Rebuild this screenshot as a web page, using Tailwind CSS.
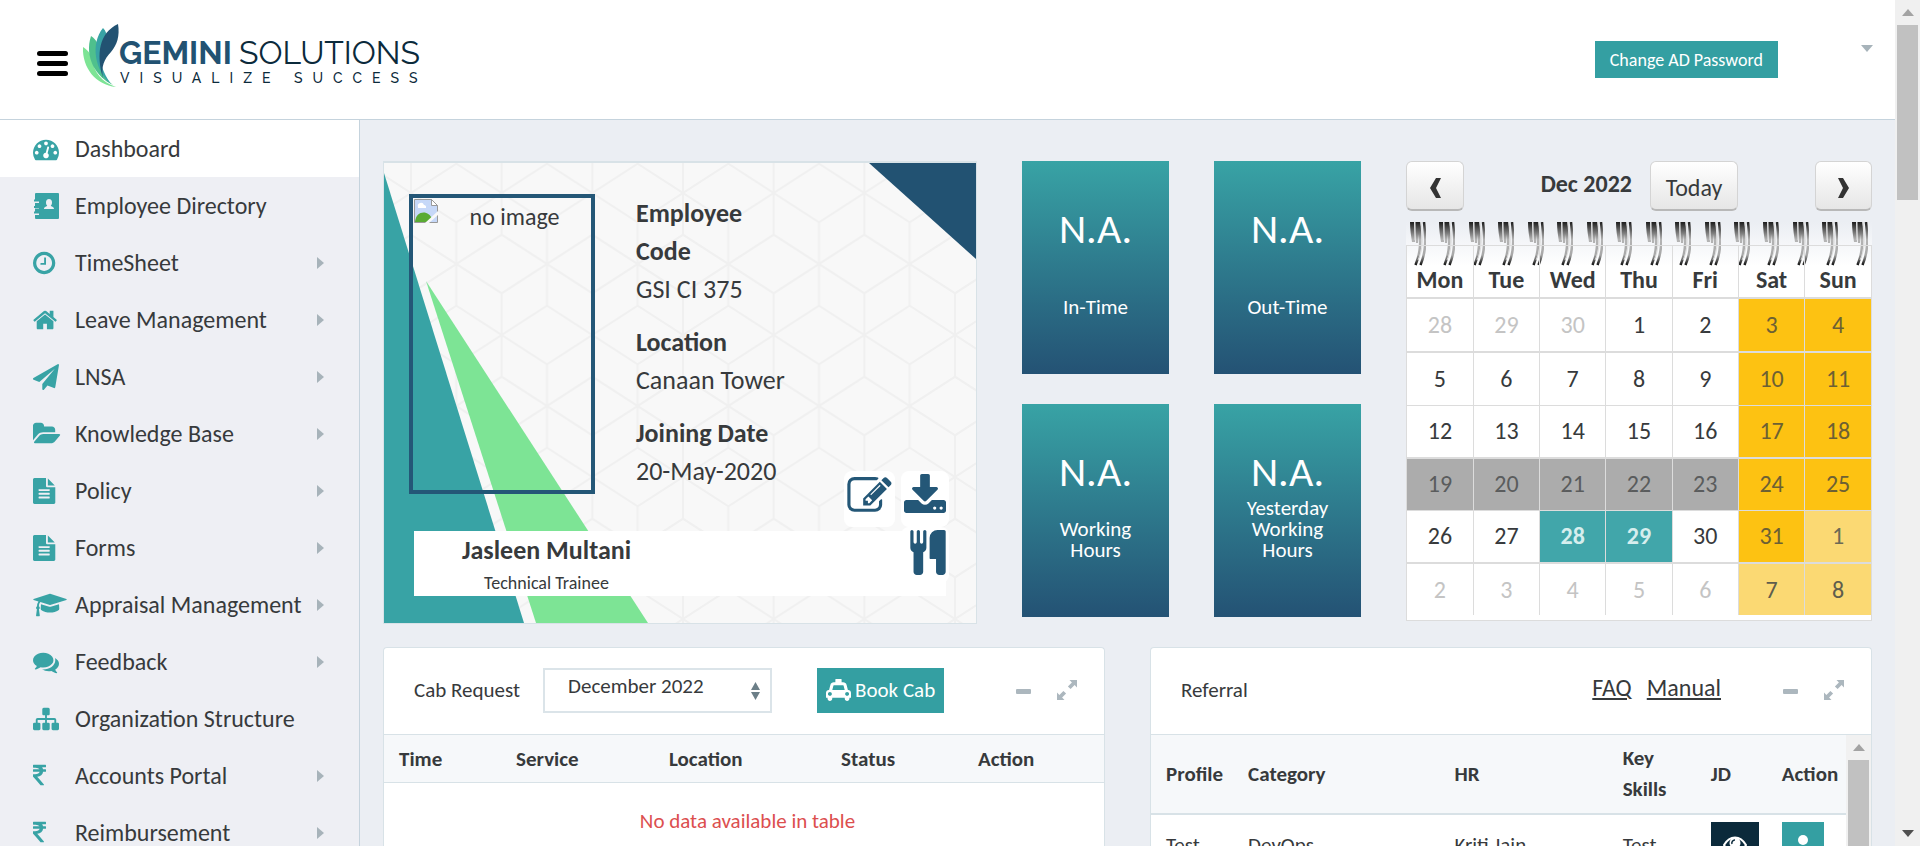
<!DOCTYPE html>
<html lang="en">
<head>
<meta charset="utf-8">
<title>Gemini Solutions</title>
<script src="https://cdn.jsdelivr.net/npm/@tailwindcss/browser@4"></script>
</head>
<body class="flex h-screen overflow-hidden bg-[#ebeef3] font-['Carlito','Lato',sans-serif] text-2xl text-[#373a3c]">

<svg class="absolute size-0" aria-hidden="true">
  <symbol id="gauge" viewBox="0 0 1792 1792"><path d="M384 1152q0-53-37.5-90.5t-90.5-37.5-90.5 37.5-37.5 90.5 37.5 90.5 90.5 37.5 90.5-37.5 37.5-90.5zm192-448q0-53-37.5-90.5t-90.5-37.5-90.5 37.5-37.5 90.5 37.5 90.5 90.5 37.5 90.5-37.5 37.5-90.5zm428 481l101-382q6-26-7.5-48.5t-38.5-29.5-48 6.5-30 39.5l-101 382q-60 5-107 43.5t-63 98.5q-20 77 20 146t117 89 146-20 89-117q16-60-6-117t-72-91zm660-33q0-53-37.5-90.5t-90.5-37.5-90.5 37.5-37.5 90.5 37.5 90.5 90.5 37.5 90.5-37.5 37.5-90.5zm-640-640q0-53-37.5-90.5t-90.5-37.5-90.5 37.5-37.5 90.5 37.5 90.5 90.5 37.5 90.5-37.5 37.5-90.5zm448 192q0-53-37.5-90.5t-90.5-37.5-90.5 37.5-37.5 90.5 37.5 90.5 90.5 37.5 90.5-37.5 37.5-90.5zm320 448q0 261-141 483-19 29-54 29h-1402q-35 0-54-29-141-221-141-483 0-182 71-348t191-286 286-191 348-71 348 71 286 191 191 286 71 348z"/></symbol>
  <symbol id="book" viewBox="0 0 26 26"><path fill-rule="evenodd" d="M3 0h22a1 1 0 0 1 1 1v24a1 1 0 0 1-1 1H3a1 1 0 0 1-1-1v-3h4v-1.500H1v-2h1v-3h4V15H1v-2h1v-3h4V8.500H1v-2h1V1a1 1 0 0 1 1-1zm13 6c-2 0-3 1.500-3 3.500 0 1.500.500 2.500 1.200 3.200-.3 1-3.200.800-3.200 3.300h10c0-2.500-2.900-2.300-3.200-3.300.7-.7 1.200-1.700 1.200-3.200C19 7.500 18 6 16 6z"/></symbol>
  <symbol id="clock" viewBox="128 0 1792 1792"><path d="M1024 544v448q0 14-9 23t-23 9h-320q-14 0-23-9t-9-23v-64q0-14 9-23t23-9h224v-352q0-14 9-23t23-9h64q14 0 23 9t9 23zm416 352q0-148-73-273t-198-198-273-73-273 73-198 198-73 273 73 273 198 198 273 73 273-73 198-198 73-273zm224 0q0 209-103 385.5t-279.5 279.5-385.5 103-385.5-103-279.5-279.500-103-385.500 103-385.500 279.500-279.500 385.500-103 385.500 103 279.500 279.500 103 385.500z"/></symbol>
  <symbol id="home" viewBox="64 0 1792 1792"><path d="M1472 992v480q0 26-19 45t-45 19h-384v-384h-256v384h-384q-26 0-45-19t-19-45v-480q0-1 .5-3t.5-3l575-474 575 474q1 2 1 6zm223-69l-62 74q-8 9-21 11h-3q-13 0-21-7l-692-577-692 577q-12 8-24 7-13-2-21-11l-62-74q-8-10-7-23.5t11-21.5l719-599q32-26 76-26t76 26l244 204v-195q0-14 9-23t23-9h192q14 0 23 9t9 23v408l219 182q10 8 11 21.5t-7 23.5z"/></symbol>
  <symbol id="plane" viewBox="0 0 1792 1792"><path d="M1764 11q33 24 27 64l-256 1536q-5 29-32 45-14 8-31 8-11 0-24-5l-453-185-242 295q-18 23-49 23-13 0-22-4-19-7-30.5-23.5t-11.5-36.5v-349l864-1059-1069 925-395-162q-37-14-40-55-2-40 32-59l1664-960q15-9 32-9 20 0 36 11z"/></symbol>
  <symbol id="folder" viewBox="0 0 1815 1792"><path d="M1815 952q0 31-31 66l-336 396q-43 51-120.5 86.5t-143.5 35.5h-1088q-34 0-60.5-13t-26.5-43q0-31 31-66l336-396q43-51 120.5-86.5t143.5-35.5h1088q34 0 60.5 13t26.5 43zm-343-344v160h-832q-94 0-197 47.5t-164 119.5l-337 396-5 6q0-4-.5-12.5t-.5-12.5v-960q0-92 66-158t158-66h320q92 0 158 66t66 158v32h544q92 0 158 66t66 158z"/></symbol>
  <symbol id="file" viewBox="128 0 1792 1792"><path d="M1596 476q14 14 28 36h-472v-472q22 14 36 28zm-476 164h544v1056q0 40-28 68t-68 28h-1344q-40 0-68-28t-28-68v-1600q0-40 28-68t68-28h800v544q0 40 28 68t68 28zm160 736v-64q0-14-9-23t-23-9h-704q-14 0-23 9t-9 23v64q0 14 9 23t23 9h704q14 0 23-9t9-23zm0-256v-64q0-14-9-23t-23-9h-704q-14 0-23 9t-9 23v64q0 14 9 23t23 9h704q14 0 23-9t9-23zm0-256v-64q0-14-9-23t-23-9h-704q-14 0-23 9t-9 23v64q0 14 9 23t23 9h704q14 0 23-9t9-23z"/></symbol>
  <symbol id="cap" viewBox="0 0 2304 1792"><path d="M1774 836l18 316q4 69-82 128t-235 93.5-323 34.5-323-34.5-235-93.5-82-128l18-316 574 181q22 7 48 7t48-7zm530-324q0 23-22 31l-1120 352q-4 1-10 1t-10-1l-652-206q-43 34-71 111.5t-34 178.5q63 36 63 109 0 69-58 107l58 433q2 14-8 25-9 11-24 11h-192q-15 0-24-11-10-11-8-25l58-433q-58-38-58-107 0-73 65-111 11-207 98-330l-333-104q-22-8-22-31t22-31l1120-352q4-1 10-1t10 1l1120 352q22 8 22 31z"/></symbol>
  <symbol id="comments" viewBox="0 0 1792 1792"><path d="M1408 768q0 139-94 257t-256.500 186.500-353.500 68.500q-86 0-176-16-124 88-278 128-36 9-86 16h-3q-11 0-20.500-8t-11.500-21q-1-3-1-6.500t.5-6.500 2-6l2.500-5 3.500-5.500 4-5 4.500-5 4-4.500q5-6 23-25t26-29.500 22.500-29 25-38.500 20.500-44q-124-72-195-177t-71-224q0-139 94-257t256.500-186.500 353.500-68.500 353.500 68.500 256.500 186.500 94 257zm384 256q0 120-71 224.500t-195 176.500q10 24 20.500 44t25 38.500 22.500 29 26 29.500 23 25q1 1 4 4.500t4.500 5 4 5 3.500 5.500l2.500 5 2 6 .5 6.500-1 6.500q-3 14-13 22t-22 7q-50-7-86-16-154-40-278-128-90 16-176 16-271 0-472-132 58 4 88 4 161 0 309-45t264-129q125-92 192-212t67-254q0-77-23-152 129 71 204 178t75 230z"/></symbol>
  <symbol id="sitemap" viewBox="0 0 1792 1792"><path d="M1792 1248v320q0 40-28 68t-68 28h-320q-40 0-68-28t-28-68v-320q0-40 28-68t68-28h96v-192h-512v192h96q40 0 68 28t28 68v320q0 40-28 68t-68 28h-320q-40 0-68-28t-28-68v-320q0-40 28-68t68-28h96v-192h-512v192h96q40 0 68 28t28 68v320q0 40-28 68t-68 28h-320q-40 0-68-28t-28-68v-320q0-40 28-68t68-28h96v-192q0-52 38-90t90-38h512v-192h-96q-40 0-68-28t-28-68v-320q0-40 28-68t68-28h320q40 0 68 28t28 68v320q0 40-28 68t-68 28h-96v192h512q52 0 90 38t38 90v192h96q40 0 68 28t28 68z"/></symbol>
  <symbol id="rupee" viewBox="448 0 1792 1792"><path d="M1345 470v102q0 14-9 23t-23 9h-168q-23 144-129 234t-276 110q167 178 459 536 14 16 4 34-8 18-29 18h-195q-16 0-25-12-306-367-498-571-9-9-9-22v-127q0-13 9.500-22.500t22.500-9.500h112q132 0 212.500-43t102.500-125h-427q-14 0-23-9t-9-23v-102q0-14 9-23t23-9h413q-57-113-268-113h-145q-13 0-22.500-9.500t-9.500-22.500v-133q0-14 9-23t23-9h832q14 0 23 9t9 23v102q0 14-9 23t-23 9h-233q47 61 64 144h171q14 0 23 9t9 23z"/></symbol>
  <symbol id="edit" viewBox="0 128 1792 1536"><path d="M888 1184l116-116-152-152-116 116v56h96v96h56zm440-720q-16-16-33 1l-350 350q-17 17-1 33t33-1l350-350q17-17 1-33zm80 594v190q0 119-84.5 203.5t-203.5 84.5h-832q-119 0-203.5-84.5t-84.5-203.5v-832q0-119 84.5-203.5t203.5-84.5h832q63 0 117 25 15 7 18 23 3 17-9 29l-49 49q-14 14-32 8-23-6-45-6h-832q-66 0-113 47t-47 113v832q0 66 47 113t113 47h832q66 0 113-47t47-113v-126q0-13 9-22l64-64q15-15 35-7t20 29zm-96-738l288 288-672 672h-288v-288zm444 132l-92 92-288-288 92-92q28-28 68-28t68 28l152 152q28 28 28 68t-28 68z"/></symbol>
  <symbol id="download" viewBox="64 0 1664 1536"><path d="M1344 1344q0-26-19-45t-45-19-45 19-19 45 19 45 45 19 45-19 19-45zm256 0q0-26-19-45t-45-19-45 19-19 45 19 45 45 19 45-19 19-45zm128-224v320q0 40-28 68t-68 28h-1472q-40 0-68-28t-28-68v-320q0-40 28-68t68-28h465l135 136q58 56 136 56t136-56l136-136h464q40 0 68 28t28 68zm-325-569q17 41-14 70l-448 448q-18 19-45 19t-45-19l-448-448q-31-29-14-70 17-39 59-39h256v-448q0-26 19-45t45-19h256q26 0 45 19t19 45v448h256q42 0 59 39z"/></symbol>
  <symbol id="cutlery" viewBox="192 64 1408 1792"><path d="M832 128v640q0 61-35.5 111t-92.5 70v779q0 52-38 90t-90 38h-128q-52 0-90-38t-38-90v-779q-57-20-92.500-70t-35.500-111v-640q0-26 19-45t45-19 45 19 19 45v416q0 26 19 45t45 19 45-19 19-45v-416q0-26 19-45t45-19 45 19 19 45v416q0 26 19 45t45 19 45-19 19-45v-416q0-26 19-45t45-19 45 19 19 45zm768 0v1600q0 52-38 90t-90 38h-128q-52 0-90-38t-38-90v-512h-224q-13 0-22.500-9.500t-9.500-22.500v-800q0-132 94-226t226-94h256q26 0 45 19t19 45z"/></symbol>
  <symbol id="taxi" viewBox="0 0 2048 1792"><path d="M1824 896q92 0 158 66t66 158v384q0 14-9 23t-23 9h-96v64q0 80-56 136t-136 56-136-56-56-136v-64h-1024v64q0 80-56 136t-136 56-136-56-56-136v-64h-96q-14 0-23-9t-9-23v-384q0-92 66-158t158-66h28l105-419q23-94 103-157t179-63h128v-224q0-14 9-23t23-9h448q14 0 23 9t9 23v224h128q99 0 179 63t103 157l105 419h28zm-1504 480q66 0 113-47t47-113-47-113-113-47-113 47-47 113 47 113 113 47zm196-480h1016l-89-357q-2-8-14-17.500t-21-9.500h-768q-9 0-21 9.500t-14 17.500zm1212 480q66 0 113-47t47-113-47-113-113-47-113 47-47 113 47 113 113 47z"/></symbol>
  <symbol id="minus" viewBox="0 0 20 20"><rect x="3" y="9" width="15" height="5" rx="1"/></symbol>
  <symbol id="expand" viewBox="0 0 20 20"><path d="M12.500 0H20v7.500l-2.400-2.400-4 4-2.700-2.700 4-4zM0 12.500l2.400 2.400 4-4 2.700 2.700-4 4L7.500 20H0z"/></symbol>
  <symbol id="right" viewBox="0 0 7 12"><path d="M0 0l7 6-7 6z"/></symbol>
  <linearGradient id="wire" gradientUnits="userSpaceOnUse" x1="0" y1="0" x2="0" y2="44"><stop offset="0" stop-color="#1c1c1c"/><stop offset=".4" stop-color="#b4b4b4"/><stop offset=".75" stop-color="#a8a8a8"/><stop offset="1" stop-color="#000"/></linearGradient>
  <symbol id="ring" viewBox="0 0 16 44">
    <path d="M0 0h4l1 20H2C1 14 0 7 0 0zM5 0h4v12l-1 9H6C5.500 14 5 7 5 0z" fill="url(#wire)"/>
    <path d="M9 0c2 18 2 30-3.500 43M14 0c2 18 2 30-3.500 43" fill="none" stroke="url(#wire)" stroke-width="2.500"/>
    <path d="M11 0c2 16 2 28-3 38M5 0v18" fill="none" stroke="#ddd" stroke-width="1"/>
  </symbol>
</svg>

<div class="flex min-w-0 flex-1 flex-col">
  <header class="flex h-[120px] shrink-0 items-start border-b border-[#c5d3dd] bg-white pr-[22px] pl-[37px]">
    <button aria-label="Toggle menu" class="mt-[51px] flex w-[31px] flex-col gap-[5px]">
      <span class="h-[5px] rounded-sm bg-black"></span><span class="h-[5px] rounded-sm bg-black"></span><span class="h-[5px] rounded-sm bg-black"></span>
    </button>
    <a href="#" aria-label="Gemini Solutions, visualize success" class="mt-[22px] ml-[14px]">
      <svg class="h-[66px] w-[360px]" viewBox="0 0 360 66">
        <path fill="#7de495" d="M1 25c5 3 9 8 10 15 1 9 8 20 23 25C14 63 0 46 1 25z"/>
        <path fill="#4fc08d" d="M9 14c6 4 8 9 8 16 0 14 3 25 14 33C14 55 2 35 9 14z"/>
        <path fill="#38a3a5" d="M21 6c3 3 4 6 3 10-6 9-8 22-2 34 2 5 5 9 7 12C13 49 8 22 21 6z"/>
        <path fill="#225272" d="M36 2c2 12-1 21-7 28-7 7-10 15-8 26C14 32 17 11 36 2z"/>
        <g class="font-['Raleway','Lato',sans-serif]">
          <text x="37" y="42" class="fill-[#225272] text-[32px] font-bold">GEMINI</text>
          <text x="157" y="42" class="fill-[#0b2a3b] text-[32px]">SOLUTIONS</text>
          <text x="38" y="61" class="fill-[#0b2a3b] text-sm font-medium tracking-[10px]">VISUALIZE SUCCESS</text>
        </g>
      </svg>
    </a>
    <button class="mt-[41px] ml-auto h-[37px] bg-[#349fa2] px-[15px] text-lg text-white">Change AD Password</button>
    <button aria-label="Account menu" class="mt-[45px] ml-[83px] flex"><svg class="h-[7px] w-3 fill-[#a7b3ba]" viewBox="0 0 12 7"><path d="M0 0h12L6 7z"/></svg></button>
  </header>

  <div class="flex min-h-0 flex-1">
    <nav class="w-[360px] shrink-0 overflow-hidden border-r border-[#c5d3dd] bg-[#eeeff4]">
      <a href="#" class="flex h-[57px] items-center bg-white pt-px pr-[35px] pl-[33px]"><span class="w-[42px]"><svg class="size-[26px] fill-[#38a3a5]"><use href="#gauge"/></svg></span>Dashboard</a>
      <a href="#" class="flex h-[57px] items-center pt-px pr-[35px] pl-[33px]"><span class="w-[42px]"><svg class="size-[26px] fill-[#38a3a5]"><use href="#book"/></svg></span>Employee Directory</a>
      <a href="#" class="flex h-[57px] items-center pt-px pr-[35px] pl-[33px]"><span class="w-[42px]"><svg class="size-[26px] fill-[#38a3a5]"><use href="#clock"/></svg></span>TimeSheet<svg class="ml-auto h-3 w-[7px] fill-[#a7b3ba]"><use href="#right"/></svg></a>
      <a href="#" class="flex h-[57px] items-center pt-px pr-[35px] pl-[33px]"><span class="w-[42px]"><svg class="size-[26px] fill-[#38a3a5]"><use href="#home"/></svg></span>Leave Management<svg class="ml-auto h-3 w-[7px] fill-[#a7b3ba]"><use href="#right"/></svg></a>
      <a href="#" class="flex h-[57px] items-center pt-px pr-[35px] pl-[33px]"><span class="w-[42px]"><svg class="size-[26px] fill-[#38a3a5]"><use href="#plane"/></svg></span>LNSA<svg class="ml-auto h-3 w-[7px] fill-[#a7b3ba]"><use href="#right"/></svg></a>
      <a href="#" class="flex h-[57px] items-center pt-px pr-[35px] pl-[33px]"><span class="w-[42px]"><svg class="h-[26px] w-[28px] fill-[#38a3a5]"><use href="#folder"/></svg></span>Knowledge Base<svg class="ml-auto h-3 w-[7px] fill-[#a7b3ba]"><use href="#right"/></svg></a>
      <a href="#" class="flex h-[57px] items-center pt-px pr-[35px] pl-[33px]"><span class="w-[42px]"><svg class="size-[26px] fill-[#38a3a5]"><use href="#file"/></svg></span>Policy<svg class="ml-auto h-3 w-[7px] fill-[#a7b3ba]"><use href="#right"/></svg></a>
      <a href="#" class="flex h-[57px] items-center pt-px pr-[35px] pl-[33px]"><span class="w-[42px]"><svg class="size-[26px] fill-[#38a3a5]"><use href="#file"/></svg></span>Forms<svg class="ml-auto h-3 w-[7px] fill-[#a7b3ba]"><use href="#right"/></svg></a>
      <a href="#" class="flex h-[57px] items-center pt-px pr-[35px] pl-[33px]"><span class="w-[42px]"><svg class="h-[26px] w-[34px] fill-[#38a3a5]"><use href="#cap"/></svg></span>Appraisal Management<svg class="ml-auto h-3 w-[7px] fill-[#a7b3ba]"><use href="#right"/></svg></a>
      <a href="#" class="flex h-[57px] items-center pt-px pr-[35px] pl-[33px]"><span class="w-[42px]"><svg class="size-[26px] fill-[#38a3a5]"><use href="#comments"/></svg></span>Feedback<svg class="ml-auto h-3 w-[7px] fill-[#a7b3ba]"><use href="#right"/></svg></a>
      <a href="#" class="flex h-[57px] items-center pt-px pr-[35px] pl-[33px]"><span class="w-[42px]"><svg class="size-[26px] fill-[#38a3a5]"><use href="#sitemap"/></svg></span>Organization Structure</a>
      <a href="#" class="flex h-[57px] items-center pt-px pr-[35px] pl-[33px]"><span class="w-[42px]"><svg class="size-[26px] fill-[#38a3a5]"><use href="#rupee"/></svg></span>Accounts Portal<svg class="ml-auto h-3 w-[7px] fill-[#a7b3ba]"><use href="#right"/></svg></a>
      <a href="#" class="flex h-[57px] items-center pt-px pr-[35px] pl-[33px]"><span class="w-[42px]"><svg class="size-[26px] fill-[#38a3a5]"><use href="#rupee"/></svg></span>Reimbursement<svg class="ml-auto h-3 w-[7px] fill-[#a7b3ba]"><use href="#right"/></svg></a>
    </nav>

    <main class="flex min-w-0 flex-1 flex-col overflow-hidden px-[23px] pt-[41px]">
      <div class="grid shrink-0 grid-cols-[594fr_339fr_466fr] gap-[45px]">

        <!-- Employee card -->
        <section class="relative flex h-[463px] flex-col overflow-hidden border border-t-2 border-[#d8e2e7] bg-[#f8f8f8] px-[25px] pt-[31px]">
          <svg class="absolute inset-0 h-full w-full" viewBox="0 0 592 460" preserveAspectRatio="none">
            <pattern id="cubes" x="27" y="30" width="90.67" height="142" patternUnits="userSpaceOnUse">
              <path fill="none" stroke="#f0f0f0" stroke-width="2" d="M45.330 29v84M0 41.700l90.670 58.600M90.670 41.700L0 100.300M0 0v42M0 142v-42M90.670 0v42M90.670 142v-42M0 0l45.330 29.300L90.670 0M0 142l45.330-29.300L90.670 142"/>
            </pattern>
            <rect width="592" height="460" fill="url(#cubes)"/>
            <path fill="#38a3a5" d="M0 10l140 450H0z"/>
            <path fill="#7de495" d="M42 118l222 342H152z"/>
            <path fill="#225272" d="M485 0h107v96z"/>
          </svg>
          <div class="relative flex">
            <div class="flex h-[300px] w-[186px] border-4 border-[#245777] pt-px pl-px">
              <svg class="size-6" viewBox="0 0 24 24"><path fill="#c6d8f8" stroke="#999" d="M.5.500h17l6 6v17H.500z"/><path fill="#fff" stroke="#999" d="M17.500.500v6h6z"/><path fill="#fff" d="M4 8a3 3 0 0 1 6-2 2.500 2.500 0 0 1 2 3H4z"/><path fill="#5aab34" d="M1 23c1-12 14-12 17-3l-4 3z"/><path fill="#f8f8f8" d="M24 12v4l-9 8h-4z"/></svg>
              <span class="flex-1 text-center leading-9">no image</span>
            </div>
            <dl class="ml-[41px] w-[160px] text-[26px] leading-[38px]">
              <dt class="w-[140px] font-bold">Employee Code</dt><dd class="mb-[15px]">GSI CI 375</dd>
              <dt class="font-bold">Location</dt><dd class="mb-[15px]">Canaan Tower</dd>
              <dt class="font-bold">Joining Date</dt><dd>20-May-2020</dd>
            </dl>
          </div>
          <div class="relative mt-[37px] ml-[5px] h-[65px] w-[532px] bg-white pl-[20px]">
            <div class="w-[225px] text-center"><h2 class="text-[26px] leading-[38px] font-bold">Jasleen Multani</h2><p class="text-lg leading-7">Technical Trainee</p></div>
            <div class="absolute -top-[60px] -right-[3px] flex w-[105px] flex-wrap justify-between">
              <button aria-label="Edit" class="flex h-14 w-[51px] items-start rounded-lg bg-white pt-[6px] pl-[3px]"><svg class="h-[38px] w-[45px] fill-[#245777]"><use href="#edit"/></svg></button>
              <button aria-label="Download" class="flex h-14 w-12 items-start rounded-lg bg-white pt-[3px] pl-[3px]"><svg class="h-[39px] w-[42px] fill-[#245777]"><use href="#download"/></svg></button>
              <button aria-label="Meals" class="ml-auto flex h-14 w-12 items-start rounded-lg bg-white pt-[3px] pl-[9px]"><svg class="h-[45px] w-9 fill-[#245777]"><use href="#cutlery"/></svg></button>
            </div>
          </div>
        </section>

        <!-- Time tiles -->
        <section class="grid grid-cols-2 content-start gap-x-[45px] gap-y-[30px] text-center text-[21px] leading-[21px] text-white">
          <div class="flex h-[213px] flex-col bg-linear-to-b from-[#38a3a5] to-[#245274] pt-12"><p class="text-[42px] leading-10">N.A.</p><p class="flex h-[69px] items-end justify-center px-6">In-Time</p></div>
          <div class="flex h-[213px] flex-col bg-linear-to-b from-[#38a3a5] to-[#245274] pt-12"><p class="text-[42px] leading-10">N.A.</p><p class="flex h-[69px] items-end justify-center px-6">Out-Time</p></div>
          <div class="flex h-[213px] flex-col bg-linear-to-b from-[#38a3a5] to-[#245274] pt-12"><p class="text-[42px] leading-10">N.A.</p><p class="flex h-[69px] items-end justify-center px-6">Working Hours</p></div>
          <div class="flex h-[213px] flex-col bg-linear-to-b from-[#38a3a5] to-[#245274] pt-12"><p class="text-[42px] leading-10">N.A.</p><p class="flex h-[69px] items-end justify-center px-6">Yesterday Working Hours</p></div>
        </section>

        <!-- Calendar -->
        <section class="flex flex-col">
          <div class="flex h-[50px]">
            <button aria-label="Previous month" class="h-[50px] w-[58px] rounded-md border border-b-2 border-[#d4d4d4] border-b-[#b8b8b8] bg-linear-to-b from-white to-[#e6e6e6] pt-1"><svg class="mx-auto h-5 w-3 fill-[#333]" viewBox="0 0 12 20"><path d="M7 0h5L7 10l5 10H7L1 10z"/></svg></button>
            <h3 class="mr-[18px] ml-auto leading-[46px] font-bold">Dec 2022</h3>
            <button class="mr-[77px] h-[50px] w-[88px] rounded-md border border-b-2 border-[#d4d4d4] border-b-[#b8b8b8] bg-linear-to-b from-white to-[#e6e6e6] pt-1">Today</button>
            <button aria-label="Next month" class="h-[50px] w-[57px] rounded-md border border-b-2 border-[#d4d4d4] border-b-[#b8b8b8] bg-linear-to-b from-white to-[#e6e6e6] pt-1"><svg class="mx-auto h-5 w-3 fill-[#333]" viewBox="0 0 12 20"><path d="M5 0H0l5 10L0 20h5l6-10z"/></svg></button>
          </div>
          <div class="relative mt-[11px] bg-linear-to-b from-[#ebeef3] to-white to-[44px] pt-[23px]">
            <div class="absolute inset-x-0 top-0 flex justify-between px-1">
              <svg class="h-11 w-4"><use href="#ring"/></svg><svg class="h-11 w-4"><use href="#ring"/></svg><svg class="h-11 w-4"><use href="#ring"/></svg><svg class="h-11 w-4"><use href="#ring"/></svg><svg class="h-11 w-4"><use href="#ring"/></svg><svg class="h-11 w-4"><use href="#ring"/></svg><svg class="h-11 w-4"><use href="#ring"/></svg><svg class="h-11 w-4"><use href="#ring"/></svg><svg class="h-11 w-4"><use href="#ring"/></svg><svg class="h-11 w-4"><use href="#ring"/></svg><svg class="h-11 w-4"><use href="#ring"/></svg><svg class="h-11 w-4"><use href="#ring"/></svg><svg class="h-11 w-4"><use href="#ring"/></svg><svg class="h-11 w-4"><use href="#ring"/></svg><svg class="h-11 w-4"><use href="#ring"/></svg><svg class="h-11 w-4"><use href="#ring"/></svg>
            </div>
            <div class="relative border border-[#dcdcdc] pb-[5px]">
            <table class="w-full table-fixed border-collapse text-center">
              <thead><tr class="h-[52px] divide-x divide-[#dcdcdc] align-bottom"><th class="pb-px">Mon</th><th class="pb-px">Tue</th><th class="pb-px">Wed</th><th class="pb-px">Thu</th><th class="pb-px">Fri</th><th class="pb-px">Sat</th><th class="pb-px">Sun</th></tr></thead>
              <tbody class="bg-white">
                <tr class="h-[54px] divide-x divide-[#dcdcdc] border-t-2 border-[#dcdcdc] text-[#c4c4c4]"><td>28</td><td>29</td><td>30</td><td class="text-[#373a3c]">1</td><td class="text-[#373a3c]">2</td><td class="bg-[#fdc212] text-[#6c6034]">3</td><td class="bg-[#fdc212] text-[#6c6034]">4</td></tr>
                <tr class="h-[53px] divide-x divide-[#dcdcdc] border-t-2 border-[#dcdcdc]"><td>5</td><td>6</td><td>7</td><td>8</td><td>9</td><td class="bg-[#fdc212] text-[#6c6034]">10</td><td class="bg-[#fdc212] text-[#6c6034]">11</td></tr>
                <tr class="h-[53px] divide-x divide-[#dcdcdc] border-t border-[#dcdcdc]"><td>12</td><td>13</td><td>14</td><td>15</td><td>16</td><td class="bg-[#fdc212] text-[#6c6034]">17</td><td class="bg-[#fdc212] text-[#6c6034]">18</td></tr>
                <tr class="h-[52px] divide-x divide-[#dcdcdc] border-t-2 border-[#dcdcdc] text-[#5a5c5d]"><td class="bg-[#acacac]">19</td><td class="bg-[#acacac]">20</td><td class="bg-[#acacac]">21</td><td class="bg-[#acacac]">22</td><td class="bg-[#acacac]">23</td><td class="bg-[#fdc212] text-[#6c6034]">24</td><td class="bg-[#fdc212] text-[#6c6034]">25</td></tr>
                <tr class="h-[53px] divide-x divide-[#dcdcdc] border-t border-[#dcdcdc]"><td>26</td><td>27</td><td class="bg-[#41a6aa] font-bold text-[#d6eeee]">28</td><td class="bg-[#41a6aa] font-bold text-[#d6eeee]">29</td><td>30</td><td class="bg-[#fdc212] text-[#6c6034]">31</td><td class="bg-[#fbd973] text-[#6c6a55]">1</td></tr>
                <tr class="h-[52px] divide-x divide-[#dcdcdc] border-t-2 border-[#dcdcdc] text-[#c4c4c4]"><td>2</td><td>3</td><td>4</td><td>5</td><td>6</td><td class="bg-[#fbd973] text-[#5f5d4d]">7</td><td class="bg-[#fbd973] text-[#5f5d4d]">8</td></tr>
              </tbody>
            </table>
            </div>
          </div>
        </section>
      </div>

      <div class="mt-[23px] grid min-h-0 flex-1 grid-cols-2 gap-[45px] text-[21px]">
        <!-- Cab requests -->
        <section class="overflow-hidden rounded-t-sm border border-b-0 border-[#d8e2e7] bg-white">
          <div class="flex h-[86px] items-center pr-[27px] pb-0.5 pl-[30px]">
            <label for="month">Cab Request</label>
            <div class="relative ml-[23px]">
              <select id="month" class="block h-[45px] w-[229px] appearance-none border-2 border-[#dbe4e9] bg-white pb-2 pl-[23px]"><option>December 2022</option></select>
              <svg class="pointer-events-none absolute top-[14px] right-3 h-[18px] w-[9px] fill-[#6c7f88]" viewBox="0 0 9 18"><path d="M4.500 0L9 8H0zM0 10h9l-4.500 8z"/></svg>
            </div>
            <button class="ml-[45px] flex h-[45px] items-center gap-1 bg-[#349fa2] px-[9px] text-white"><svg class="h-[22px] w-[25px] fill-white"><use href="#taxi"/></svg>Book Cab</button>
            <button aria-label="Collapse" class="ml-auto flex"><svg class="size-5 fill-[#acb7be]"><use href="#minus"/></svg></button>
            <button aria-label="Expand" class="ml-6 flex"><svg class="size-5 fill-[#acb7be]"><use href="#expand"/></svg></button>
          </div>
          <table class="w-full table-fixed text-left">
            <thead><tr class="h-12 border-y border-[#d8e2e7] bg-[#f6f8fa]"><th class="w-[117px] pl-[15px]">Time</th><th class="w-[153px] pl-[15px]">Service</th><th class="w-[172px] pl-[15px]">Location</th><th class="w-[137px] pl-[15px]">Status</th><th class="w-[142px] pl-[15px]">Action</th></tr></thead>
            <tbody><tr class="h-[76px]"><td colspan="5" class="pl-1.5 text-center text-[#dc4f4f]">No data available in table</td></tr></tbody>
          </table>
        </section>

        <!-- Referrals -->
        <section class="overflow-hidden rounded-t-sm border border-b-0 border-[#d8e2e7] bg-white">
          <div class="flex h-[86px] items-center pr-[27px] pb-0.5 pl-[30px]">
            <h3>Referral</h3>
            <a href="#" class="ml-auto pb-1 text-2xl underline">FAQ</a>
            <a href="#" class="ml-[15px] pb-1 text-2xl underline">Manual</a>
            <button aria-label="Collapse" class="ml-[59px] flex"><svg class="size-5 fill-[#acb7be]"><use href="#minus"/></svg></button>
            <button aria-label="Expand" class="ml-6 flex"><svg class="size-5 fill-[#acb7be]"><use href="#expand"/></svg></button>
          </div>
          <div class="flex border-t border-[#d8e2e7]">
            <div class="min-w-0 flex-1">
            <table class="w-full table-fixed text-left">
              <thead><tr class="h-[79px] border-b-2 border-[#d8e2e7] bg-[#f6f8fa] leading-[31px]"><th class="w-[82px] pl-[15px]">Profile</th><th class="w-[206px] pl-[15px]">Category</th><th class="w-[168px] pl-[15px]">HR</th><th class="w-[88px] pr-2 pl-[15px]">Key Skills</th><th class="w-[71px] pl-[15px]">JD</th><th class="w-[79px] pl-[15px]">Action</th></tr></thead>
              <tbody><tr class="h-[60px]"><td class="pl-[15px]">Test</td><td class="pl-[15px]">DevOps</td><td class="pl-[15px]">Kriti Jain</td><td class="pl-[15px]">Test</td>
                <td class="pl-[15px]"><button aria-label="View job description" class="flex h-[45px] w-12 items-center justify-center bg-[#0b2a3b]"><svg class="h-[18px] w-6" viewBox="0 0 24 18"><path fill="none" stroke="#fff" stroke-width="2" d="M1 9c6-10 16-10 22 0-6 10-16 10-22 0z"/><circle cx="12" cy="7" r="5.500" fill="#fff"/><path fill="none" stroke="#0b2a3b" stroke-width="1.500" d="M9 8a3 3 0 0 1 3-4"/></svg></button></td>
                <td class="pl-[15px]"><button aria-label="Refer" class="flex h-[45px] w-[42px] items-center justify-center bg-[#349fa2]"><svg class="h-5 w-[18px] fill-white" viewBox="0 0 18 20"><circle cx="9" cy="5" r="5"/><path d="M0 20c0-7 2-9 5-9 2 2 6 2 8 0 3 0 5 2 5 9z"/></svg></button></td></tr></tbody>
            </table>
            </div>
            <div class="flex h-[300px] w-[25px] shrink-0 flex-col items-center bg-[#f1f1f1]">
              <svg class="my-[9px] h-[7px] w-3 fill-[#a3a3a3]" viewBox="0 0 12 7"><path d="M6 0l6 7H0z"/></svg><span class="w-[21px] flex-1 bg-[#c1c1c1]"></span>
            </div>
          </div>
        </section>
      </div>
    </main>
  </div>
</div>

<!-- Page scrollbar -->
<div class="flex w-[25px] shrink-0 flex-col items-center bg-[#f0f0f0]">
  <svg class="my-[9px] h-[7px] w-3 fill-[#a3a3a3]" viewBox="0 0 12 7"><path d="M6 0l6 7H0z"/></svg>
  <span class="h-[175px] w-[21px] bg-[#c1c1c1]"></span>
  <svg class="mt-auto mb-[9px] h-[7px] w-3 fill-[#505050]" viewBox="0 0 12 7"><path d="M0 0h12L6 7z"/></svg>
</div>
</body>
</html>
